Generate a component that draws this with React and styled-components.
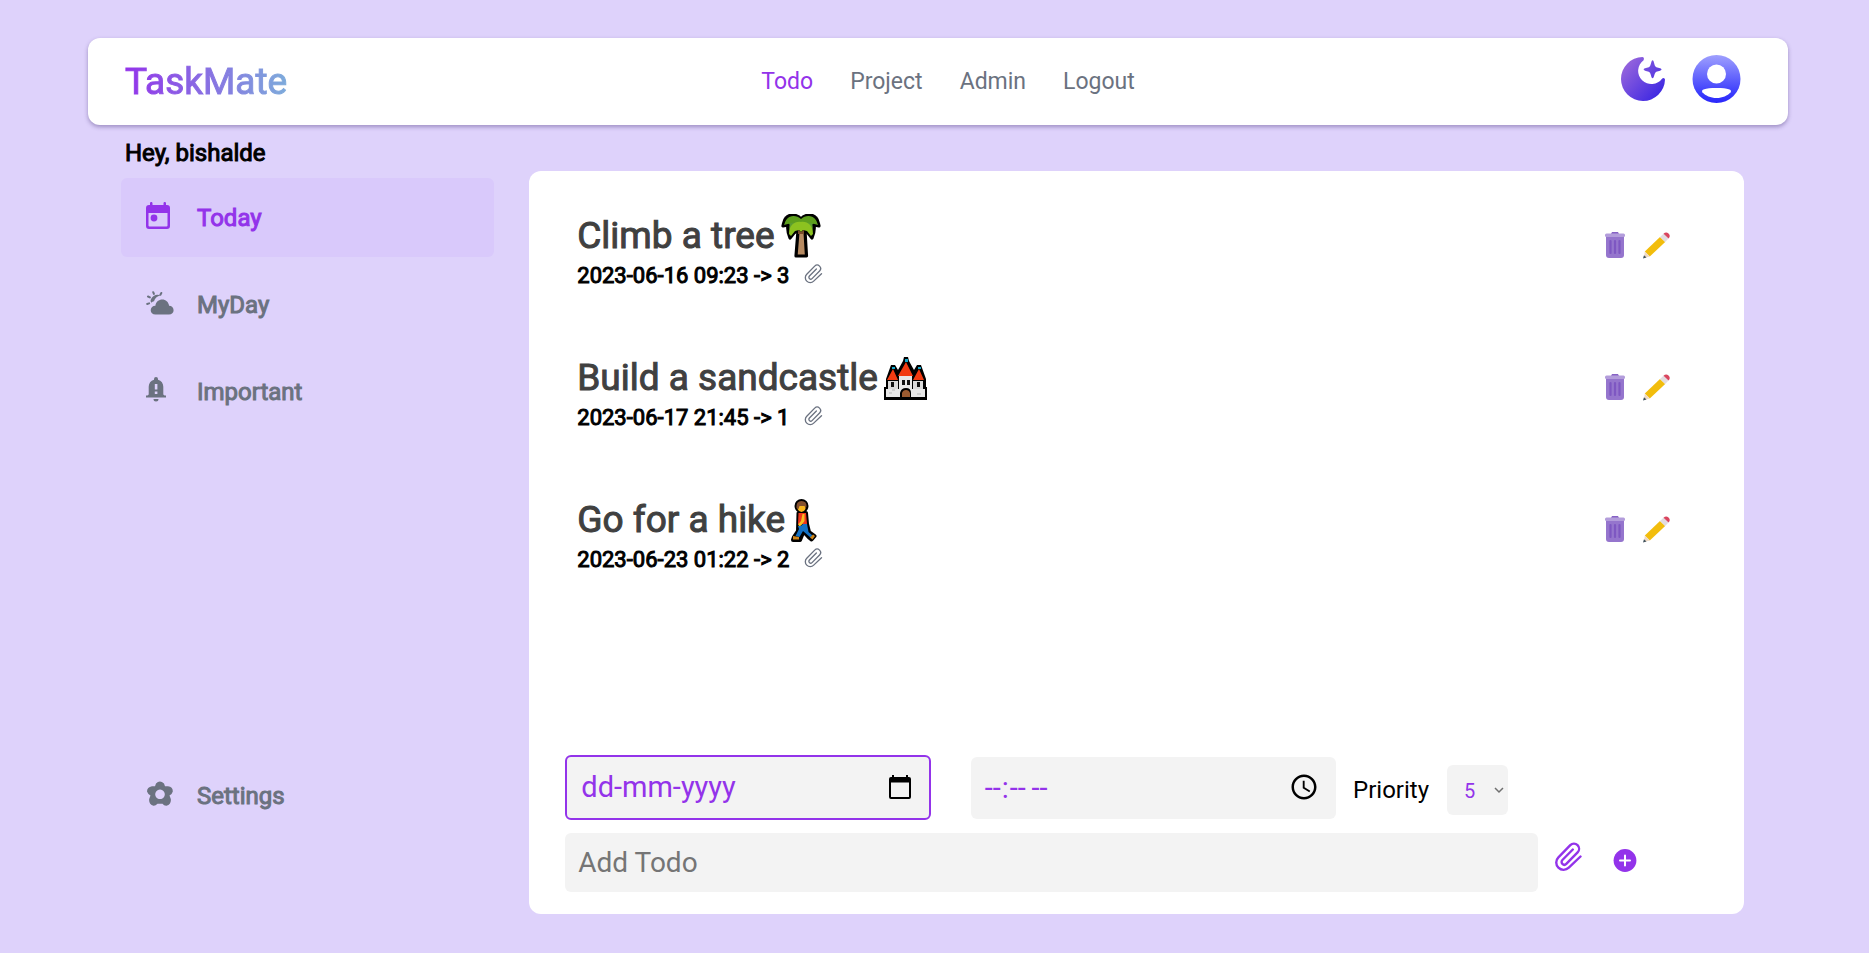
import React from 'react';
import styled, { createGlobalStyle, css } from 'styled-components';

const GlobalStyle = createGlobalStyle`
  *, *::before, *::after { box-sizing: border-box; }
  body {
    margin: 0;
    background: #ded2fb;
    font-family: Roboto, "Liberation Sans", sans-serif;
    color: #000;
  }
  button, input, select { font-family: inherit; }
  svg { display: block; }
`;

const heavy = css`
  -webkit-text-stroke: 1px currentColor;
`;

const Page = styled.div`
  min-height: 100vh;
  display: flex;
  flex-direction: column;
  padding: 38px 81px 39px 88px;
`;

const Header = styled.header`
  display: flex;
  align-items: center;
  justify-content: space-between;
  height: 87px;
  padding: 0 47px 0 37px;
  background: #fff;
  border-radius: 12px;
  box-shadow: 0 2px 4px rgba(60, 40, 110, 0.4);
`;

const Logo = styled.a`
  font-size: 37px;
  line-height: 48px;
  text-decoration: none;
  color: transparent;
  background: linear-gradient(to right, #9333ea, #7dabdb);
  background-clip: text;
  -webkit-text-stroke: 1px transparent;
`;

const Nav = styled.nav`
  display: flex;
  gap: 37px;
`;

const NavLink = styled.a`
  font-size: 23px;
  line-height: 32px;
  text-decoration: none;
  color: ${(p) => (p.$active ? '#9333ea' : '#6b7280')};
`;

const HeaderActions = styled.div`
  display: flex;
  align-items: center;
  gap: 15px;
  padding-bottom: 6px;
`;

const IconButton = styled.button`
  display: flex;
  align-items: center;
  justify-content: center;
  width: ${(p) => p.$width || 'auto'};
  padding: 0;
  border: 0;
  background: none;
  color: inherit;
  cursor: pointer;
`;

const Body = styled.div`
  flex: 1;
  display: flex;
  gap: 35px;
  padding: 0 44px 0 33px;
`;

const Sidebar = styled.aside`
  width: 23%;
  flex: none;
  display: flex;
  flex-direction: column;
  padding: 12px 0 79px;
`;

const Greeting = styled.h1`
  ${heavy}
  margin: 0 0 9px 4px;
  font-size: 24px;
  line-height: 32px;
  font-weight: 400;
`;

const Menu = styled.nav`
  flex: 1;
  display: flex;
  flex-direction: column;
  gap: 8px;
`;

const MenuLink = styled.a`
  ${heavy}
  display: flex;
  align-items: center;
  height: 79px;
  padding-left: 25px;
  border-radius: 6px;
  font-size: 24px;
  line-height: 32px;
  text-decoration: none;
  color: ${(p) => (p.$active ? '#9333ea' : '#6b7280')};
  background: ${(p) => (p.$active ? '#d9c9fb' : 'transparent')};
  &:last-child { margin-top: auto; }
`;

const MenuIcon = styled.span`
  width: 51px;
  padding-bottom: 4px;
`;

const Panel = styled.main`
  flex: 1;
  min-width: 0;
  display: flex;
  flex-direction: column;
  justify-content: space-between;
  margin-top: 46px;
  padding: 41px 0 22px;
  background: #fff;
  border-radius: 12px;
`;

const TaskList = styled.ul`
  margin: 0;
  padding: 0 74px 0 48px;
  list-style: none;
  display: flex;
  flex-direction: column;
  gap: 62px;
`;

const Task = styled.li`
  display: flex;
  justify-content: space-between;
`;

const TaskTitle = styled.h2`
  ${heavy}
  display: flex;
  align-items: center;
  gap: 6px;
  margin: 0;
  font-size: 37px;
  line-height: 48px;
  font-weight: 400;
  color: #404040;
`;

const TaskMeta = styled.p`
  ${heavy}
  display: flex;
  align-items: center;
  gap: 15px;
  margin: 0;
  font-size: 22px;
  line-height: 32px;
`;

const TaskActions = styled.div`
  display: flex;
  align-items: flex-start;
  gap: 18px;
  padding-top: 20px;
`;

const Form = styled.form`
  display: flex;
  flex-direction: column;
  gap: 13px;
  padding-left: 36px;
`;

const FormRow = styled.div`
  display: flex;
  align-items: center;
`;

const fieldBox = css`
  border: 0;
  border-radius: 6px;
  background: #f3f3f3;
  font-size: 28px;
`;

const DateField = styled.div`
  ${fieldBox}
  display: flex;
  align-items: center;
  width: 31%;
  height: 65px;
  margin-right: 40px;
  padding: 0 18px 2px 14px;
  border: 2px solid #9333ea;
`;

const DateInput = styled.input`
  flex: 1;
  min-width: 0;
  padding: 0;
  border: 0;
  outline: 0;
  background: none;
  font-size: 29px;
  color: #9333ea;
  &::placeholder { color: #9333ea; opacity: 1; }
`;

const TimeInput = styled.input`
  ${fieldBox}
  width: 31%;
  height: 62px;
  padding: 0 14px 0 13px;
  font-size: 29px;
  color: #9333ea;
`;

const PriorityLabel = styled.label`
  margin: 4px 18px 0 17px;
  font-size: 24px;
  line-height: 32px;
`;

const SelectBox = styled.span`
  position: relative;
  margin-top: 4px;
`;

const PrioritySelect = styled.select`
  display: block;
  appearance: none;
  width: 61px;
  height: 50px;
  padding: 2px 0 0 17px;
  border: 0;
  border-radius: 6px;
  background: #f3f3f3;
  font-size: 20px;
  color: #9333ea;
`;

const SelectArrow = styled.svg`
  position: absolute;
  right: 4px;
  top: 22px;
  pointer-events: none;
`;

const TodoInput = styled.input`
  ${fieldBox}
  width: 82.5%;
  height: 59px;
  padding: 0 13px;
  &::placeholder { color: #757575; opacity: 1; }
`;

const FormActions = styled.div`
  display: flex;
  align-items: flex-end;
  gap: 31px;
  margin-left: 17px;
  padding-bottom: 11px;
  color: #9333ea;
`;

const MoonIcon = () => (
  <svg width="44" height="44" viewBox="0 0 44 44" aria-hidden="true">
    <defs>
      <linearGradient id="moon" x1="0" y1="0" x2="40" y2="36" gradientUnits="userSpaceOnUse">
        <stop offset="0.1" stopColor="#9a67dc" />
        <stop offset="1" stopColor="#3f29e2" />
      </linearGradient>
    </defs>
    <g fill="url(#moon)">
      <path d="M21.500 0A22 22 0 1 0 44 22.500Q43.500 20 41.200 21.400A13.200 13.200 0 1 1 22.600 3.200Q23.600.3 21.500 0z" />
      <path d="M31.600 3.300c1.500 0 1.500 5.200 3.100 6.500 1.600 1.500 5.800 1.200 5.800 2.700s-4.300 1.400-5.800 2.800-1.600 6-3.100 6-1.500-4.600-3.100-6-5.800-1.300-5.800-2.800 4.200-1.200 5.800-2.700c1.600-1.300 1.600-6.500 3.100-6.500z" />
    </g>
  </svg>
);

const AvatarIcon = () => (
  <svg width="49" height="48" viewBox="0 0 49 48" aria-hidden="true">
    <defs>
      <linearGradient id="avatar" x1="0" y1="0" x2="0" y2="1">
        <stop offset="0" stopColor="#9fa0fe" />
        <stop offset="0.8" stopColor="#3a3bfc" />
        <stop offset="1" stopColor="#2a27fb" />
      </linearGradient>
    </defs>
    <circle cx="24.5" cy="24" r="24" fill="url(#avatar)" />
    <circle cx="24.5" cy="19" r="9.5" fill="#fff" />
    <path d="M10.500 37.500c-2-3 2-4.500 14-4.500s16 1.500 14 4.500c-3 3-8 5.500-14 5.500s-11-2.500-14-5.500z" fill="#fff" />
  </svg>
);

const TodayIcon = () => (
  <svg width="24" height="27" viewBox="0 0 24 27" aria-hidden="true">
    <path
      fill="currentColor"
      fillRule="evenodd"
      d="M4 1.200a1.200 1.200 0 0 1 2.500 0V3h11V1.200a1.200 1.200 0 0 1 2.500 0V3h1a3 3 0 0 1 3 3v18a3 3 0 0 1-3 3H3a3 3 0 0 1-3-3V6a3 3 0 0 1 3-3h1zM2.500 11v12.500a1 1 0 0 0 1 1h17a1 1 0 0 0 1-1V11z"
    />
    <circle cx="8" cy="16" r="3.400" fill="currentColor" />
  </svg>
);

const MyDayIcon = () => (
  <svg width="28" height="24" viewBox="0 0 28 24" aria-hidden="true">
    <path fill="currentColor" d="M4.500 10a7 7 0 0 1 10-5.500c-3.600.7-5.600 2.800-6.500 5.700-1.200.3-1.900.7-2.700 1.500z" />
    <path
      fill="currentColor"
      d="M9.500 23.500c-3 0-4.800-2-4.800-4.300 0-2.500 2-4.500 4.700-4.500.5-4 3.500-6.200 6.900-6.200s6.200 2.500 6.800 6.200c2.600 0 4.500 2 4.500 4.500 0 2.300-1.800 4.300-4.700 4.300z"
    />
    <path stroke="currentColor" strokeWidth="2" strokeLinecap="round" d="M7.200 1.200l.7 1.700M15.300 2l-.9 1.700M2 5.500l1.900.9M1.200 13l1.900-.6" />
  </svg>
);

const BellIcon = () => (
  <svg width="20" height="25" viewBox="0 0 20 25" aria-hidden="true">
    <path
      fill="currentColor"
      fillRule="evenodd"
      d="M10 0a2 2 0 0 1 2 2v.8c3.400.9 5.300 3.700 5.300 7V17.500l1.200 1H20V20.500H0V18.500h1.500l1.200-1V9.800c0-3.300 2-6.100 5.300-7V2a2 2 0 0 1 2-2zM8.800 7v5.500h2.600V7zm0 7.500V17h2.600v-2.500zM7.500 22h5a2.500 2.500 0 0 1-5 0z"
    />
  </svg>
);

const SettingsIcon = () => (
  <svg width="28" height="26" viewBox="0 0 28 26" aria-hidden="true">
    <path
      fill="currentColor"
      fillRule="evenodd"
      d="M10 2.500Q13.800-1.500 18 2.500L19 5.300 22 5.200Q27 6 26.800 10.500 26.500 12.500 23.500 14.500L24.800 18Q25.500 23 20.500 24.800 18 25 16.500 22.800H11.500Q9.500 25 7.500 24.800 2.500 23 3.200 18L4.500 14.500Q1.500 12.500 1 10.500 1 6 6 5.200L9 5.300zM14 8.500a4.800 4.800 0 1 0 .01 0z"
    />
  </svg>
);

const ClipIcon = ({ width, height, stroke }) => (
  <svg width={width} height={height} viewBox="0 0 27 30" aria-hidden="true">
    <path
      fill="none"
      stroke="currentColor"
      strokeWidth={stroke}
      strokeLinecap="round"
      strokeLinejoin="round"
      d="M25.500 14.500L13.800 25.700A7.300 7.300 0 0 1 3.400 15.300L15.300 3.200A5.100 5.100 0 0 1 22.600 10.400L11.300 21.900A2.700 2.700 0 0 1 7.400 18L17.800 7.500"
    />
  </svg>
);

const MetaClip = styled.span`
  color: #6b7280;
  padding-bottom: 4px;
`;

const PlusIcon = () => (
  <svg width="24" height="23" viewBox="0 0 24 23" aria-hidden="true">
    <circle cx="12" cy="11.500" r="11.400" fill="currentColor" />
    <path stroke="#fff" strokeWidth="2" strokeLinecap="round" d="M12 6.500v10M7 11.500h10" />
  </svg>
);

const TrashIcon = () => (
  <svg width="20" height="26" viewBox="0 0 20 26" aria-hidden="true">
    <path fill="#8662c4" d="M7 0h6l1 2H6z" />
    <path fill="#9575cd" d="M1 4h18v19a3 3 0 0 1-3 3H4a3 3 0 0 1-3-3z" />
    <rect y="1.500" width="20" height="3.500" rx="1.500" fill="#b39ddb" />
    <path stroke="#7e57c2" strokeWidth="2.200" strokeLinecap="round" d="M5.500 9v12M10 9v12M14.500 9v12" />
  </svg>
);

const PencilIcon = () => (
  <svg width="27" height="27" viewBox="0 0 27 27" aria-hidden="true">
    <path fill="#f2bd0c" d="M17 5L22.200 10 6.800 24.500 1.800 19.500z" />
    <path fill="#e2dce0" d="M17 5l3.500-3.200 5 4.700-3.300 3.500z" />
    <path fill="#d9455f" d="M20.500 1.800Q23-.500 25.500 1.500 28 4 25.500 6.500z" />
    <path fill="#eed9c4" d="M1.800 19.500l5 5L1 26z" />
    <path fill="#40515c" d="M1 23.200L3.500 25.500 0 26.500z" />
  </svg>
);

const PalmIcon = () => (
  <svg width="40" height="44" viewBox="0 0 40 44" aria-hidden="true">
    <g stroke="#000" strokeWidth="3.200" strokeLinejoin="round">
      <path fill="#b78b62" d="M17 17h7l1.500 25H15z" />
      <path
        fill="#5c9e31"
        d="M20 5C16 0 8 0 5 4c-2 2-2 4-3 8l5-1c-1 5 0 8 2 13l4-5 3-2h8l3 2 4 5c2-5 3-8 2-13l5 1c-1-4-1-6-3-8-3-4-11-4-15 1z"
      />
    </g>
    <path fill="#5d9f1e" d="M20 5C16 1 9 1 6 5c-2 2-2 4-3 6l7-2 10-1 10 1 7 2c-1-2-1-4-3-6-3-4-10-4-14 0z" />
    <path fill="#8cc220" d="M20 8c-6-1-12 3-12 12l2 2 4-5 4-1 2 2 2-2 4 1 4 5 2-2c0-9-6-13-12-12z" />
    <path fill="#7a4d2c" d="M17 16l3 2 3-2v4h-6z" />
  </svg>
);

const CastleIcon = () => (
  <svg width="43" height="43" viewBox="0 0 43 43" aria-hidden="true">
    <path
      fill="#000"
      d="M20 0h4l1 4 5 9 3-5h4l5 14v8h1v13H0V30h2v-8L7 8h4l3 5 5-9z"
    />
    <path fill="#d9d9d9" d="M4 24h10v8H4zM29 24h10v8H29z" />
    <path fill="#e8e8e8" d="M15 19h13v14H15zM2 32h39v8H2z" />
    <path fill="#f23b12" d="M22 5l7 14H14zM9 12l5 11H3zM35 12l5 11H29z" />
    <path fill="#11aacd" d="M21 2h3v3h-3zM8 10h3v2H8zM34 10h3v2h-3z" />
    <path fill="#111" d="M18 23h3v5h-3zM23 23h3v5h-3zM7 25h3v5H7zM33 25h3v5h-3z" />
    <path fill="#000" d="M16 40v-4q1-5 6-5t5 5v4z" />
    <path fill="#9b5b31" d="M18 40v-4q1-3 4-3t4 3v4z" />
    <path stroke="#b5b5b5" d="M5 36h3M33 37h4M8 33h3" />
  </svg>
);

const WalkerIcon = () => (
  <svg width="26" height="43" viewBox="0 0 26 43" aria-hidden="true">
    <g stroke="#000" strokeWidth="4" strokeLinejoin="round">
      <circle cx="10.500" cy="7" r="5" />
      <path d="M7.500 14h7.500l1 11 2 8 5.500 4-3 3.500-2.500-2-5.500-6-3.500 8.500H2l1-3 4-6z" />
    </g>
    <path fill="#f8b51c" d="M6.500 6h8v4q-1.500 3-4 3t-4-3z" />
    <path fill="#84502e" d="M5.500 9q-.500-7 5-7t5 6l-1 1-1-2H8.500l-1 3z" />
    <path fill="#ef351b" d="M7.500 14H15l1 11H7z" />
    <path fill="#f8bd20" d="M11.500 15h2v7l-3 4-2 1.500-1.500-2 3-3.500z" />
    <path fill="#1371c4" d="M7 27l3 0 2-2h4l1.500 8 4 3.500-2 2-7.500-6.500-3.500 6-4-1 3.500-7z" />
    <path fill="#ce8418" d="M2 37l6 1v2.500H2zM19 38.500l3-3 2 1.500-2.500 3.500z" />
  </svg>
);

const CalendarIcon = () => (
  <svg width="22" height="24" viewBox="0 0 22 24" aria-hidden="true">
    <path
      fill="#000"
      fillRule="evenodd"
      d="M3 0h2v2h12V0h2v2h1a2 2 0 0 1 2 2v18a2 2 0 0 1-2 2H2a2 2 0 0 1-2-2V4a2 2 0 0 1 2-2h1zM2 7.500V22h18V7.500z"
    />
  </svg>
);

const navItems = ['Todo', 'Project', 'Admin', 'Logout'];

const menuItems = [
  { label: 'Today', Icon: TodayIcon },
  { label: 'MyDay', Icon: MyDayIcon },
  { label: 'Important', Icon: BellIcon },
  { label: 'Settings', Icon: SettingsIcon },
];

const tasks = [
  { title: 'Climb a tree', Icon: PalmIcon, meta: '2023-06-16 09:23 -> 3' },
  { title: 'Build a sandcastle', Icon: CastleIcon, meta: '2023-06-17 21:45 -> 1' },
  { title: 'Go for a hike', Icon: WalkerIcon, meta: '2023-06-23 01:22 -> 2' },
];

export default function App() {
  return (
    <>
      <GlobalStyle />
      <Page>
        <Header>
          <Logo href="#">TaskMate</Logo>
          <Nav>
            {navItems.map((item, i) => (
              <NavLink key={item} href="#" $active={i === 0}>{item}</NavLink>
            ))}
          </Nav>
          <HeaderActions>
            <IconButton $width="68px" aria-label="Toggle theme"><MoonIcon /></IconButton>
            <IconButton aria-label="Profile"><AvatarIcon /></IconButton>
          </HeaderActions>
        </Header>
        <Body>
          <Sidebar>
            <Greeting>Hey, bishalde</Greeting>
            <Menu>
              {menuItems.map(({ label, Icon }, i) => (
                <MenuLink key={label} href="#" $active={i === 0}>
                  <MenuIcon><Icon /></MenuIcon>
                  {label}
                </MenuLink>
              ))}
            </Menu>
          </Sidebar>
          <Panel>
            <TaskList>
              {tasks.map(({ title, Icon, meta }) => (
                <Task key={title}>
                  <div>
                    <TaskTitle>{title}<Icon /></TaskTitle>
                    <TaskMeta>
                      {meta}
                      <MetaClip><ClipIcon width={19} height={20} stroke={2} /></MetaClip>
                    </TaskMeta>
                  </div>
                  <TaskActions>
                    <IconButton aria-label="Delete"><TrashIcon /></IconButton>
                    <IconButton aria-label="Edit"><PencilIcon /></IconButton>
                  </TaskActions>
                </Task>
              ))}
            </TaskList>
            <Form onSubmit={(e) => e.preventDefault()}>
              <FormRow>
                <DateField>
                  <DateInput type="text" placeholder="dd-mm-yyyy" aria-label="Date" />
                  <IconButton type="button" aria-label="Open calendar"><CalendarIcon /></IconButton>
                </DateField>
                <TimeInput type="time" aria-label="Time" />
                <PriorityLabel htmlFor="priority">Priority</PriorityLabel>
                <SelectBox>
                  <PrioritySelect id="priority" defaultValue="5">
                    {[1, 2, 3, 4, 5].map((n) => <option key={n}>{n}</option>)}
                  </PrioritySelect>
                  <SelectArrow width="10" height="7" viewBox="0 0 10 7" aria-hidden="true">
                    <path d="M1 1l4 4 4-4" fill="none" stroke="#6f6f6f" strokeWidth="1.500" />
                  </SelectArrow>
                </SelectBox>
              </FormRow>
              <FormRow>
                <TodoInput type="text" placeholder="Add Todo" aria-label="Add Todo" />
                <FormActions>
                  <IconButton type="button" aria-label="Attach file"><ClipIcon width={27} height={30} stroke={2.4} /></IconButton>
                  <IconButton type="submit" aria-label="Add"><PlusIcon /></IconButton>
                </FormActions>
              </FormRow>
            </Form>
          </Panel>
        </Body>
      </Page>
    </>
  );
}
